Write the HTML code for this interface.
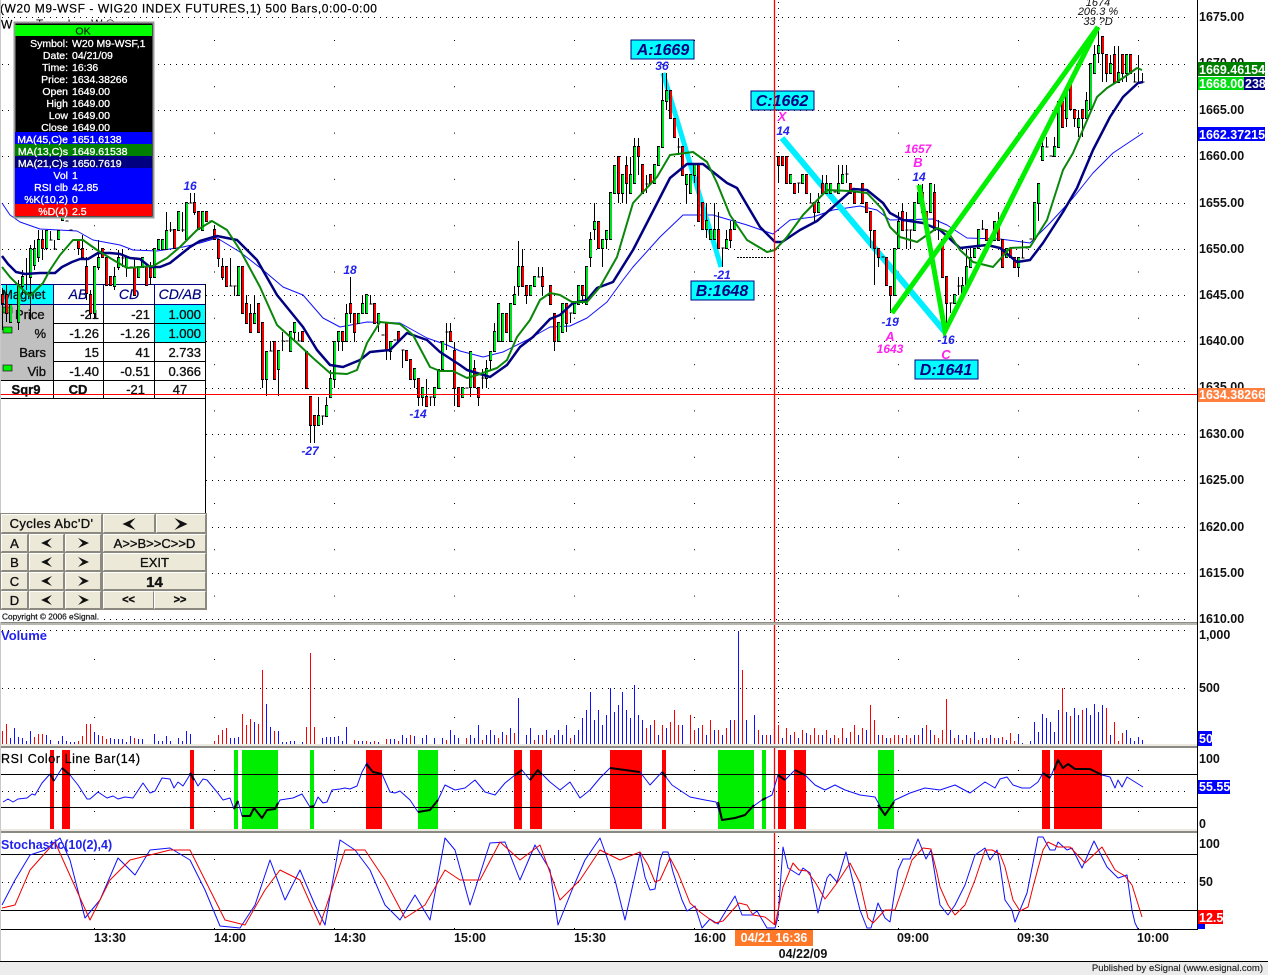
<!DOCTYPE html>
<html><head><meta charset="utf-8"><title>W20 M9-WSF chart</title>
<style>
html,body{margin:0;padding:0;background:#fff}
body{width:1268px;height:975px;overflow:hidden;position:relative;font-family:"Liberation Sans",sans-serif}
svg{position:absolute;left:0;top:0}
svg text{font-family:"Liberation Sans",sans-serif}
polyline{stroke-linejoin:round}
.ax{font-size:12.5px;font-weight:bold;fill:#111}
.wb{font-size:12.5px;font-weight:bold;fill:#fff}
.t{font-size:13px;fill:#111;stroke:#111;stroke-width:.35}
.ti{font-size:14px;font-style:italic;fill:#000080;stroke:#000080;stroke-width:.2}
.n{font-size:12px;font-weight:bold;font-style:italic;fill:#2222ee;text-anchor:middle}
.m{font-size:13px;font-style:italic;fill:#ff22ee;text-anchor:middle;font-weight:bold}
.lb{font-size:16px;font-weight:bold;font-style:italic;fill:#000080;text-anchor:middle}
.lr{font-size:10.5px;fill:#fff;stroke:#fff;stroke-width:.3;text-anchor:end}
.lv{font-size:10.5px;fill:#fff;stroke:#fff;stroke-width:.3}
.b{position:absolute;box-sizing:border-box;background:#ece9d8;border:1px solid;border-color:#fff #8c8a80 #8c8a80 #fff;font-size:13px;color:#111;text-align:center;-webkit-text-stroke:.35px #111;display:flex;align-items:center;justify-content:center;white-space:nowrap}
.b svg{position:static}
</style></head><body>
<svg width="1268" height="975" viewBox="0 0 1268 975" shape-rendering="auto">
<defs>
<path id="g" d="M10 305V322M18 285V322M22 277V286M30 249V277M34 249V265M38 240V257M46 231V248M58 231V239M62 217V220M94 267V313M98 258V267M114 277V286M118 258V267M126 258V267M138 267V277M142 258V267M154 249V277M158 240V249M162 240V249M166 231V249M178 212V230M186 203V239M202 212V230M238 267V295M254 314V323M266 352V379M278 351V369M290 332V351M294 323V332M318 416V425M326 406V416M330 379V397M334 342V379M338 332V341M346 314V341M358 314V323M362 304V313M366 295V313M378 314V323M390 342V351M414 369V379M422 388V397M434 388V397M438 370V388M442 342V369M462 388V397M470 352V387M486 369V378M490 352V360M494 332V351M498 304V341M502 314V341M510 304V341M514 295V304M518 267V286M530 286V295M534 277V286M558 323V341M562 304V332M574 304V313M578 286V304M586 267V304M590 240V257M594 222V229M602 240V248M606 231V239M610 193V239M614 166V193M622 175V193M630 175V193M634 147V183M654 165V183M658 147V165M662 101V147M666 91V101M686 175V184M690 175V193M694 165V175M706 221V229M710 230V239M714 230V239M726 240V248M734 221V229M790 175V183M802 175V183M818 203V212M826 184V193M830 184V193M838 184V193M842 175V183M894 249V295M898 222V248M914 203V230M918 193V203M930 184V212M954 295V303M962 286V295M966 267V286M970 258V267M974 249V257M978 230V248M994 222V240M1006 249V257M1018 258V267M1034 203V239M1038 184V203M1042 147V160M1054 147V156M1058 102V147M1066 91V118M1078 119V127M1086 101V118M1090 64V109M1094 55V73M1098 46V53M1110 64V73M1118 73V82M1126 55V73"/>
<path id="r" d="M2 295V303M6 295V313M42 240V248M78 240V248M82 249V257M86 267V293M90 295V313M102 249V257M106 258V285M110 277V285M134 268V295M146 267V285M150 267V277M174 230V248M194 203V212M198 212V229M206 212V221M214 230V239M218 240V258M222 267V277M226 267V286M242 267V313M246 304V323M250 314V332M258 304V332M262 323V379M274 342V379M302 332V341M306 352V388M310 397V425M314 416V425M342 332V341M350 304V313M354 314V332M374 304V323M386 323V350M398 332V341M406 351V360M410 360V379M418 379V397M426 397V406M450 332V341M454 351V388M458 388V406M474 369V387M478 388V397M506 314V332M522 267V286M526 286V295M542 277V286M550 286V304M554 314V341M566 304V323M582 286V295M598 222V248M618 157V193M626 166V183M638 147V156M642 165V193M650 175V183M670 91V118M674 119V137M682 147V175M698 165V221M702 203V229M718 230V248M730 230V240M778 157V165M782 157V165M786 157V183M794 184V193M806 175V193M814 203V212M822 184V193M850 184V193M854 193V203M862 184V203M866 203V212M870 212V230M874 231V248M878 249V257M886 258V285M890 287V295M902 212V230M922 193V212M926 212V221M934 193V230M942 240V277M946 277V303M986 230V240M998 222V240M1002 240V267M1010 249V257M1014 258V267M1062 102V127M1070 82V109M1074 110V118M1082 110V118M1102 37V53M1106 55V73M1114 55V82M1122 55V73M1130 55V73"/>
</defs>

<!-- dotted grids -->
<g stroke="#000" stroke-width="1" stroke-dasharray="1 5" fill="none">
<path d="M2 17.5H1188M2 64.5H1188M2 110.5H1188M2 156.5H1188M2 203.5H1188M2 249.5H1188M2 295.5H1188M2 341.5H1188M2 388.5H1188M2 434.5H1188M2 480.5H1188M2 527.5H1188M2 573.5H1188M2 619.5H1188M2 630.5H1188M2 688.5H1188M2 791.5H1188M2 882.5H1188"/>
<path d="M778.5 2V930"/>
</g>
<g stroke="#000" stroke-width="1" stroke-dasharray="1 45.3" fill="none">
<path d="M94.5 40V624M214.5 40V624M334.5 40V624M454.5 40V624M574.5 40V624M694.5 40V624M898.5 40V624M1018.5 40V624M1138.5 40V624"/>
</g>
<g stroke="#000" stroke-width="1" stroke-dasharray="1 57" fill="none">
<path d="M94.5 659V745M214.5 659V745M334.5 659V745M454.5 659V745M574.5 659V745M694.5 659V745M898.5 659V745M1018.5 659V745M1138.5 659V745"/>
</g>
<g stroke="#000" stroke-width="1" stroke-dasharray="1 40" fill="none">
<path d="M94.5 770V830M214.5 770V830M334.5 770V830M454.5 770V830M574.5 770V830M694.5 770V830M898.5 770V830M1018.5 770V830M1138.5 770V830"/>
</g>
<g stroke="#000" stroke-width="1" stroke-dasharray="1 68" fill="none">
<path d="M94.5 859V930M214.5 859V930M334.5 859V930M454.5 859V930M574.5 859V930M694.5 859V930M898.5 859V930M1018.5 859V930M1138.5 859V930"/>
</g>

<!-- table -->
<rect x="0" y="284" width="205.5" height="230" fill="#fff"/>
<rect x="2" y="285" width="51" height="19" fill="#00ffff"/>
<rect x="1" y="304" width="52" height="76" fill="#c0c0c0"/>
<rect x="155" y="304" width="50" height="38" fill="#00ffff"/>
<g stroke="#000080" fill="none">
<path d="M1 284.5H205M53.5 284V304M103.5 284V304M154.5 284V304M1 304.5H205"/>
</g>
<g stroke="#000" fill="none">
<path d="M53 323.5H205M53 342.5H205M53 361.5H205M1 380.5H205M1 398.5H205M53.5 304V399M103.5 304V399M154.5 304V399M205.5 284V514"/>
</g>
<g>
<text x="2" y="299" class="t">Magnet</text>
<text x="15" y="319" class="t">Price</text>
<text x="46" y="338" text-anchor="end" class="t">%</text>
<text x="46" y="357" text-anchor="end" class="t">Bars</text>
<text x="46" y="376" text-anchor="end" class="t">Vib</text>
<text x="26" y="394" text-anchor="middle" class="t" style="font-weight:bold">Sqr9</text>
<text x="78" y="299" text-anchor="middle" class="ti">AB</text>
<text x="129" y="299" text-anchor="middle" class="ti">CD</text>
<text x="180" y="299" text-anchor="middle" class="ti">CD/AB</text>
<text x="99" y="319" text-anchor="end" class="t">-21</text><text x="150" y="319" text-anchor="end" class="t">-21</text><text x="201" y="319" text-anchor="end" class="t">1.000</text>
<text x="99" y="338" text-anchor="end" class="t">-1.26</text><text x="150" y="338" text-anchor="end" class="t">-1.26</text><text x="201" y="338" text-anchor="end" class="t">1.000</text>
<text x="99" y="357" text-anchor="end" class="t">15</text><text x="150" y="357" text-anchor="end" class="t">41</text><text x="201" y="357" text-anchor="end" class="t">2.733</text>
<text x="99" y="376" text-anchor="end" class="t">-1.40</text><text x="150" y="376" text-anchor="end" class="t">-0.51</text><text x="201" y="376" text-anchor="end" class="t">0.366</text>
<text x="78" y="394" text-anchor="middle" class="t" style="font-weight:bold">CD</text>
<text x="145" y="394" text-anchor="end" class="t">-21</text>
<text x="180" y="394" text-anchor="middle" class="t">47</text>
</g>
<rect x="3" y="307" width="9" height="6" fill="#00ee00" stroke="#000" stroke-width=".6"/>
<rect x="3" y="327" width="9" height="6" fill="#00ee00" stroke="#000" stroke-width=".6"/>
<rect x="3" y="365" width="9" height="6" fill="#00ee00" stroke="#000" stroke-width=".6"/>

<!-- thin MA45 -->
<polyline fill="none" stroke="#1010ff" stroke-width="1" points="2,203 10,215 20,222 40,229 77,231 93,240 120,245 133,250 157,251 183,247 200,243 217,238 240,252 263,270 283,287 303,295 323,318 340,327 367,322 400,323 427,338 447,345 460,351 483,357 503,352 527,340 550,327 570,326 587,318 607,302 623,280 633,267 660,237 683,215 713,215 747,225 773,234 790,220 813,217 833,210 860,206 877,210 890,220 933,219 947,225 967,238 1000,239 1030,243 1050,223 1073,198 1093,173 1113,153 1143,133"/>

<!-- cyan pattern lines -->
<g fill="none" stroke="#00eeff">
<path d="M663 73L721 267" stroke-width="5"/>
<path d="M782 138L945 332" stroke-width="6"/>
</g>

<!-- candles -->
<g transform="translate(.5,0)" stroke="#000" stroke-width="1" fill="none">
<path d="M2 288V330M6 285V322M18 280V330M22 270V295M26 258V290M30 245V320M34 240V270M38 230V262M42 230V260M46 231V250M50 231V240M54 240V250M78 240V255M82 235V260M86 257V300M90 290V318M94 267V318M98 240V270M114 267V290M118 250V270M122 250V267M126 258V277M134 258V295M150 262V285M166 212V249M170 222V232M182 212V232M186 203V240M190 193V203M194 193V215M214 225V240M218 240V267M222 258V280M230 258V286M234 286V296M246 295V323M250 304V332M254 295V323M262 323V388M266 352V396M270 341V351M278 351V396M282 332V351M294 323V342M298 332V341M310 397V443M314 416V443M318 397V425M322 416V425M326 397V416M330 370V397M334 342V388M338 332V351M342 332V351M346 304V341M350 277V323M354 314V342M362 295V313M370 295V304M378 314V332M386 323V360M390 342V360M402 350V368M414 369V388M418 379V406M422 388V406M426 379V406M430 397V406M434 388V406M446 323V350M450 323V341M454 342V406M458 388V406M470 352V397M474 360V387M478 388V406M482 369V388M486 360V388M490 352V370M494 323V351M514 286V304M518 241V296M522 249V286M526 286V304M538 267V277M542 267V296M554 314V351M566 304V332M570 313V323M582 286V304M590 232V267M594 203V240M602 240V267M606 231V249M614 175V193M618 157V203M622 175V203M626 157V203M630 157V193M634 138V183M638 138V175M646 175V193M662 73V147M666 73V110M678 138V155M686 175V203M694 165V183M706 203V238M714 203V239M718 212V248M722 248V267M726 230V248M730 221V248M778 157V183M798 183V193M810 193V203M814 203V221M818 193V212M822 175V193M826 175V193M838 165V193M842 165V183M846 165V183M870 212V248M874 231V285M878 249V267M890 287V313M898 212V248M902 203V230M906 212V249M910 230V249M918 184V203M922 184V212M934 184V230M938 220V240M946 277V332M950 303V313M958 277V295M962 277V295M966 249V286M970 248V267M982 220V230M998 212V240M1018 258V277M1022 240V258M1038 184V221M1042 138V160M1046 137V147M1054 137V156M1062 93V127M1066 91V127M1074 110V127M1078 110V137M1082 110V137M1086 92V118M1094 45V73M1098 27V63M1102 37V82M1106 55V82M1110 55V73M1114 46V82M1118 46V82M1122 55V82M1126 55V82M1134 73V82M1138 55V82M1142 73V82"/>
<path d="M49 240h3M53 249h3M65 221h3M69 230h3M73 240h3M121 258h3M129 267h3M169 230h3M181 230h3M189 203h3M209 221h3M229 286h3M233 286h3M269 351h3M281 341h3M285 341h3M297 341h3M321 416h3M369 304h3M381 335h3M393 340h3M401 350h3M429 397h3M445 332h3M465 388h3M481 378h3M537 277h3M545 295h3M569 313h3M645 184h3M677 147h3M721 248h3M797 183h3M809 203h3M833 192h3M845 174h3M881 257h3M905 230h3M909 230h3M937 230h3M949 303h3M957 286h3M981 229h3M989 240h3M1021 258h3M1025 248h3M1029 239h3M1045 147h3M1049 156h3M1133 82h3M1137 82h3M1141 82h3"/>
<g stroke-width="3">
<use href="#g" y="-1"/><use href="#g" y="1"/><use href="#r" y="-1"/><use href="#r" y="1"/>
</g>
</g>
<g transform="translate(1,0)" fill="none" stroke-width="2">
<use href="#g" stroke="#00e020"/>
<use href="#r" stroke="#ee0000"/>
</g>

<!-- dashed -->
<path d="M737 257.5H775" stroke="#000" stroke-dasharray="2 1" fill="none"/>

<!-- MA21 navy -->
<polyline fill="none" stroke="#000080" stroke-width="2.5" points="2,256 8,264 16,272 25,274 40,273 55,273 62,267 72,262 80,259 88,259 98,253 110,253 120,254 130,258 140,259 150,267 160,267 170,263 180,255 190,247 200,241 217,236 237,240 257,260 277,295 303,327 317,350 330,365 343,367 360,360 370,352 390,350 407,333 427,340 440,352 460,365 467,370 490,377 507,365 520,347 533,337 550,319 560,315 573,303 587,300 597,288 613,282 633,250 650,217 670,178 687,164 703,164 713,172 727,183 737,188 747,205 760,227 775,242 782,242 800,230 817,221 833,207 853,189 867,190 883,203 890,213 903,220 923,223 940,230 960,248 987,245 1000,248 1017,262 1030,260 1043,243 1063,212 1077,188 1093,150 1110,117 1123,97 1138,83 1143,82"/>
<!-- MA13 green -->
<polyline fill="none" stroke="#0a860a" stroke-width="2" points="2,267 10,277 20,287 30,296 43,283 50,270 60,255 73,240 83,240 97,250 110,258 127,268 140,267 153,266 167,258 180,247 197,230 212,221 227,230 240,250 260,287 277,325 297,343 313,358 330,373 347,374 357,370 367,343 380,322 400,324 413,335 430,367 440,371 453,371 467,378 477,375 497,368 507,360 517,337 530,320 540,300 550,293 560,295 572,302 587,302 600,287 617,257 633,203 657,177 670,155 693,152 707,162 717,183 730,215 747,240 767,252 775,250 787,237 803,215 827,190 850,191 867,193 883,210 890,227 900,237 917,242 937,228 948,232 960,250 973,262 993,267 1010,248 1030,247 1047,220 1063,170 1073,153 1097,97 1107,88 1123,78 1137,68 1142,70"/>

<!-- green pattern lines -->
<g fill="none" stroke="#00f000" stroke-width="5">
<path d="M892 313L1098 27"/>
<path d="M919 185L945 331L1098 27"/>
</g>

<!-- annotations -->
<g>
<rect x="631" y="40" width="63" height="19" fill="#00ffff" stroke="#000080"/><text x="663" y="55" class="lb">A:1669</text>
<rect x="751" y="91" width="63" height="19" fill="#00ffff" stroke="#000080"/><text x="782" y="106" class="lb">C:1662</text>
<rect x="691" y="281" width="63" height="19" fill="#00ffff" stroke="#000080"/><text x="722" y="296" class="lb">B:1648</text>
<rect x="915" y="360" width="63" height="19" fill="#00ffff" stroke="#000080"/><text x="946" y="375" class="lb">D:1641</text>
<text x="662" y="70" class="n">36</text>
<text x="783" y="135" class="n">14</text>
<text x="722" y="279" class="n">-21</text>
<text x="190" y="190" class="n">16</text>
<text x="350" y="274" class="n">18</text>
<text x="310" y="455" class="n">-27</text>
<text x="418" y="418" class="n">-14</text>
<text x="919" y="181" class="n">14</text>
<text x="890" y="326" class="n">-19</text>
<text x="946" y="344" class="n">-16</text>
<text x="782" y="121" class="m">X</text>
<text x="918" y="153" class="m" style="font-size:12px">1657</text>
<text x="918" y="167" class="m">B</text>
<text x="890" y="341" class="m">A</text>
<text x="890" y="353" class="m" style="font-size:12px">1643</text>
<text x="946" y="359" class="m">C</text>
<g style="font-size:11px;font-style:italic;fill:#111;text-anchor:middle">
<text x="1098" y="6">1674</text>
<text x="1098" y="15">206.3 %</text>
<text x="1098" y="25">33 ?D</text>
</g>
</g>

<!-- crosshair -->
<path d="M0 394.5H1197" stroke="#ff0000" fill="none"/>
<path d="M774.5 0V925" stroke="#ff0000" stroke-width="1.3" fill="none"/>

<!-- title -->
<text x="0" y="12.5" textLength="377" style="font-size:12px;fill:#000;stroke:#000;stroke-width:.2">(W20 M9-WSF - WIG20 INDEX FUTURES,1) 500 Bars,0:00-0:00</text>
<text x="1" y="28.5" style="font-size:12px;fill:#000;stroke:#000;stroke-width:.2">W</text>
<text x="36" y="28" style="font-size:12px;fill:#000">T  r  a  d  e  r   W  ®</text>

<!-- Volume pane -->
<text x="1" y="640" style="font-size:13px;font-weight:bold;fill:#2222ee">Volume</text>
<path fill="none" stroke="#ff0000" d="M2.5 731V745M6.5 724V745M34.5 737V745M38.5 734V745M42.5 734V745M78.5 741V745M82.5 736V745M86.5 724V745M90.5 724V745M102.5 736V745M106.5 739V745M134.5 738V745M214.5 741V745M218.5 735V745M222.5 730V745M226.5 728V745M242.5 714V745M246.5 725V745M250.5 719V745M258.5 724V745M262.5 670V745M274.5 731V745M306.5 727V745M310.5 653V745M314.5 727V745M354.5 740V745M366.5 741V745M374.5 741V745M386.5 739V745M398.5 741V745M410.5 735V745M446.5 740V745M466.5 738V745M482.5 740V745M498.5 738V745M506.5 735V745M514.5 733V745M534.5 740V745M542.5 735V745M550.5 738V745M570.5 738V745M646.5 728V745M654.5 720V745M662.5 725V745M670.5 722V745M674.5 710V745M678.5 725V745M690.5 715V745M694.5 730V745M702.5 725V745M710.5 720V745M718.5 730V745M726.5 728V745M734.5 720V745M742.5 670V745M758.5 730V745M766.5 735V745M778.5 725V745M786.5 728V745M794.5 732V745M802.5 730V745M810.5 735V745M814.5 728V745M818.5 735V745M826.5 730V745M834.5 735V745M838.5 738V745M842.5 728V745M850.5 732V745M854.5 725V745M862.5 728V745M870.5 705V745M874.5 720V745M882.5 735V745M890.5 738V745M894.5 735V745M898.5 735V745M906.5 735V745M910.5 738V745M918.5 735V745M926.5 725V745M934.5 735V745M938.5 738V745M942.5 730V745M946.5 699V745M954.5 738V745M962.5 740V745M970.5 738V745M978.5 740V745M986.5 738V745M994.5 738V745M1002.5 737V745M1010.5 733V745M1014.5 741V745M1062.5 688V745M1070.5 716V745M1082.5 710V745M1106.5 708V745M1114.5 722V745M1118.5 741V745M1122.5 733V745"/>
<path fill="none" stroke="#1010ff" d="M10.5 738V745M14.5 728V745M18.5 737V745M22.5 738V745M26.5 741V745M30.5 731V745M46.5 735V745M50.5 740V745M58.5 741V745M62.5 736V745M66.5 741V745M70.5 742V745M74.5 742V745M94.5 732V745M98.5 735V745M110.5 738V745M114.5 739V745M118.5 739V745M122.5 739V745M126.5 742V745M130.5 736V745M138.5 739V745M142.5 739V745M154.5 734V745M158.5 741V745M162.5 741V745M166.5 736V745M170.5 741V745M178.5 738V745M182.5 741V745M186.5 731V745M190.5 734V745M230.5 738V745M234.5 738V745M238.5 737V745M254.5 722V745M266.5 704V745M270.5 727V745M278.5 731V745M282.5 742V745M286.5 742V745M290.5 741V745M294.5 741V745M302.5 742V745M322.5 738V745M326.5 737V745M330.5 737V745M334.5 737V745M338.5 736V745M342.5 741V745M346.5 727V745M358.5 741V745M362.5 741V745M370.5 742V745M378.5 742V745M390.5 739V745M394.5 739V745M402.5 735V745M406.5 738V745M414.5 736V745M422.5 738V745M426.5 735V745M434.5 738V745M442.5 738V745M450.5 730V745M454.5 735V745M458.5 738V745M470.5 735V745M474.5 738V745M478.5 725V745M486.5 735V745M490.5 730V745M494.5 735V745M502.5 732V745M510.5 728V745M518.5 698V745M526.5 735V745M530.5 728V745M538.5 735V745M546.5 730V745M554.5 735V745M558.5 730V745M562.5 735V745M566.5 725V745M574.5 735V745M578.5 730V745M582.5 718V745M586.5 710V745M590.5 692V745M594.5 720V745M598.5 710V745M602.5 725V745M606.5 715V745M610.5 688V745M614.5 712V745M618.5 705V745M622.5 692V745M626.5 710V745M630.5 718V745M634.5 685V745M638.5 715V745M642.5 720V745M650.5 725V745M658.5 735V745M666.5 728V745M682.5 725V745M698.5 728V745M706.5 735V745M714.5 730V745M722.5 735V745M730.5 720V745M738.5 631V745M746.5 720V745M754.5 715V745M762.5 735V745M770.5 735V745M782.5 738V745M790.5 735V745M798.5 738V745M806.5 733V745M822.5 735V745M830.5 738V745M846.5 738V745M858.5 735V745M866.5 730V745M878.5 735V745M886.5 738V745M902.5 738V745M914.5 735V745M922.5 728V745M930.5 730V745M950.5 730V745M958.5 735V745M966.5 735V745M974.5 732V745M982.5 738V745M990.5 735V745M998.5 738V745M1006.5 740V745M1018.5 734V745M1022.5 743V745M1030.5 741V745M1034.5 722V745M1038.5 732V745M1042.5 714V745M1046.5 718V745M1050.5 722V745M1054.5 732V745M1058.5 710V745M1066.5 712V745M1074.5 708V745M1078.5 715V745M1086.5 708V745M1090.5 715V745M1094.5 704V745M1098.5 712V745M1102.5 705V745M1110.5 735V745M1126.5 730V745M1130.5 738V745M1134.5 741V745M1138.5 737V745M1142.5 740V745"/>

<!-- RSI pane -->
<g fill="#ff0000">
<rect x="50" y="750" width="4" height="80"/><rect x="62" y="750" width="8" height="80"/><rect x="190" y="750" width="4" height="80"/><rect x="366" y="750" width="16" height="80"/><rect x="514" y="750" width="8" height="80"/><rect x="530" y="750" width="12" height="80"/><rect x="610" y="750" width="32" height="80"/><rect x="662" y="750" width="4" height="80"/><rect x="778" y="750" width="8" height="80"/><rect x="794" y="750" width="12" height="80"/><rect x="1042" y="750" width="8" height="80"/><rect x="1054" y="750" width="48" height="80"/>
</g>
<g fill="#00ee00">
<rect x="234" y="750" width="4" height="80"/><rect x="242" y="750" width="36" height="80"/><rect x="310" y="750" width="4" height="80"/><rect x="418" y="750" width="20" height="80"/><rect x="718" y="750" width="36" height="80"/><rect x="762" y="750" width="4" height="80"/><rect x="878" y="750" width="16" height="80"/>
</g>
<path d="M0 774.5H1197M0 807.5H1197" stroke="#000" fill="none"/>
<polyline fill="none" stroke="#1010ff" points="3,802 8,799 13,802 18,799 27,798 32,794 35,795 42,783 50,774 54,781 62,768 70,775 78,785 87,799 90,799 98,792 107,798 113,796 118,799 125,797 133,798 143,783 150,793 155,791 162,778 170,779 174,788 178,782 183,786 191,773 198,786 203,779 207,780 217,792 223,800 230,798 234,809 238,801 242,816 250,816 254,808 262,818 267,810 275,809 280,800 293,798 302,794 310,807 314,806 318,797 323,803 327,802 332,790 340,789 345,788 350,789 357,786 362,772 367,763 373,772 382,774 390,792 395,793 400,791 410,800 418,812 430,810 438,800 445,785 455,790 465,788 475,780 485,792 495,795 505,783 515,775 522,770 530,780 538,770 550,782 560,790 570,782 580,798 590,790 600,778 610,768 625,770 640,772 650,785 662,772 672,785 690,797 705,800 716,802 722,820 735,818 745,815 755,805 762,800 772,795 778,775 785,780 795,770 805,775 815,785 825,790 835,785 845,790 860,795 875,797 885,815 895,800 910,793 925,788 940,790 955,785 970,793 985,782 995,788 1000,779 1007,777 1013,785 1022,788 1030,788 1038,782 1043,773 1050,778 1058,760 1063,768 1068,764 1075,769 1090,769 1102,775 1110,777 1115,788 1118,780 1122,787 1127,777 1143,787"/>
<g fill="none" stroke="#000" stroke-width="2">
<polyline points="50,774 54,781"/><polyline points="62,768 70,775"/><polyline points="190,773 194,780"/>
<polyline points="234,809 238,801"/><polyline points="242,816 250,816 254,808 262,818 267,810 275,809 278,803"/><polyline points="310,807 314,806"/>
<polyline points="366,764 373,772 382,774"/><polyline points="418,812 430,810 438,800"/><polyline points="515,775 522,770"/><polyline points="530,780 538,770 542,775"/>
<polyline points="610,768 625,770 640,772"/><polyline points="662,772 666,777"/><polyline points="718,802 722,820 735,818 745,815 754,805"/><polyline points="762,800 766,798"/>
<polyline points="778,775 785,780"/><polyline points="795,770 805,775"/><polyline points="878,805 885,815 894,802"/>
<polyline points="1043,773 1050,778"/><polyline points="1054,770 1058,760 1063,768 1068,764 1075,769 1090,769 1102,775"/>
</g>
<text x="1" y="763" style="font-size:12.5px;fill:#000;stroke:#000;stroke-width:.25" textLength="139">RSI Color Line Bar(14)</text>

<!-- Stoch pane -->
<path d="M0 854.5H1197M0 910.5H1197M0 929.5H1197" stroke="#000" fill="none"/>
<polyline fill="none" stroke="#1010ff" points="2,905 15,880 30,855 45,850 60,838 70,860 85,918 100,900 118,858 135,875 150,850 170,848 190,860 205,890 220,926 240,928 255,905 270,860 285,900 300,870 315,905 325,925 340,840 355,850 370,870 385,905 400,920 415,895 430,920 445,838 455,850 470,905 490,843 505,842 520,880 535,845 550,870 558,925 572,890 585,860 600,838 615,880 625,920 640,853 645,877 650,890 655,889 660,860 663,852 668,852 673,872 682,900 687,911 695,906 702,928 710,919 718,924 727,909 735,896 742,915 752,915 757,911 767,928 775,928 778,917 783,847 788,868 799,875 803,868 810,873 818,913 827,878 830,874 837,882 846,852 853,882 860,910 867,928 871,928 878,903 885,918 890,922 898,870 903,859 910,859 918,839 926,859 931,850 937,887 940,905 948,915 955,905 965,885 975,855 985,848 990,860 997,850 1000,865 1005,900 1012,910 1015,922 1020,910 1027,893 1033,863 1038,837 1043,837 1050,850 1055,850 1058,842 1067,850 1072,848 1082,868 1094,841 1107,867 1118,878 1127,875 1132,910 1135,923 1138,929"/>
<polyline fill="none" stroke="#ee0000" points="2,908 15,905 30,870 55,842 72,880 90,920 110,880 130,860 150,855 170,850 190,850 210,890 225,920 245,925 265,890 280,870 300,880 320,925 345,850 365,850 385,880 405,918 425,905 445,870 460,880 480,880 500,842 520,860 540,845 560,900 580,880 600,850 620,860 640,852 648,865 655,882 660,880 670,858 678,873 690,903 700,912 715,923 723,921 739,903 747,905 753,915 765,917 775,925 783,887 793,863 799,870 807,871 815,882 825,899 837,883 850,863 860,883 868,918 873,923 885,910 895,910 903,887 912,860 923,848 931,849 937,873 940,887 948,905 955,915 965,905 975,880 985,850 992,850 1000,854 1005,867 1013,900 1020,911 1028,907 1033,887 1043,850 1048,842 1058,847 1070,847 1085,863 1102,847 1115,870 1125,876 1132,885 1142,917"/>
<text x="1" y="849" style="font-size:12.5px;font-weight:bold;fill:#2222ee">Stochastic(10(2),4)</text>

<!-- separators -->
<rect x="0" y="622" width="1197" height="3" fill="#b8b6ae"/><rect x="0" y="622" width="1197" height="1" fill="#8a8a84"/>
<rect x="0" y="744" width="1197" height="4" fill="#ece9e0"/><rect x="0" y="746" width="1197" height="2" fill="#8a8a84"/>
<rect x="0" y="829" width="1197" height="4" fill="#ece9e0"/><rect x="0" y="831" width="1197" height="2" fill="#8a8a84"/>
<rect x="0" y="0" width="1" height="961" fill="#c8c8c8"/>

<!-- axis -->
<path d="M1197.5 0V930" stroke="#000" fill="none"/>
<g class="ax">
<text x="1199" y="21">1675.00</text><text x="1199" y="67">1670.00</text><text x="1199" y="114">1665.00</text><text x="1199" y="160">1660.00</text><text x="1199" y="207">1655.00</text><text x="1199" y="253">1650.00</text><text x="1199" y="299">1645.00</text><text x="1199" y="345">1640.00</text><text x="1199" y="391">1635.00</text><text x="1199" y="438">1630.00</text><text x="1199" y="484">1625.00</text><text x="1199" y="531">1620.00</text><text x="1199" y="577">1615.00</text><text x="1199" y="623">1610.00</text>
<text x="1199" y="639">1,000</text><text x="1199" y="692">500</text>
<text x="1199" y="763">100</text><text x="1199" y="828">0</text>
<text x="1199" y="848">100</text><text x="1199" y="886">50</text>
<text x="110" y="942" text-anchor="middle">13:30</text><text x="230" y="942" text-anchor="middle">14:00</text><text x="350" y="942" text-anchor="middle">14:30</text><text x="470" y="942" text-anchor="middle">15:00</text><text x="590" y="942" text-anchor="middle">15:30</text><text x="710" y="942" text-anchor="middle">16:00</text><text x="913" y="942" text-anchor="middle">09:00</text><text x="1033" y="942" text-anchor="middle">09:30</text><text x="1153" y="942" text-anchor="middle">10:00</text>
<text x="803" y="958" text-anchor="middle">04/22/09</text>
</g>
<rect x="1198" y="62" width="67" height="14" fill="#008000"/><text x="1199" y="74" class="wb">1669.46154</text>
<rect x="1198" y="77" width="46" height="13" fill="#00dd10"/><rect x="1244" y="77" width="21" height="13" fill="#000080"/><text x="1199" y="88" class="wb">1668.00</text><text x="1245" y="88" class="wb">238</text>
<rect x="1198" y="127" width="67" height="14" fill="#0000ff"/><text x="1199" y="139" class="wb">1662.37215</text>
<rect x="1198" y="388" width="67" height="14" fill="#ff7f3f"/><text x="1199" y="399" class="wb">1634.38266</text>
<rect x="1198" y="731" width="14" height="15" fill="#0000ff"/><text x="1199" y="743" class="wb">50</text>
<rect x="1198" y="780" width="32" height="14" fill="#0000ff"/><text x="1199" y="791" class="wb">55.55</text>
<rect x="1198" y="910" width="25" height="14" fill="#ff0000"/><text x="1199" y="922" class="wb">12.5</text>
<rect x="1198" y="924" width="7" height="5" fill="#0000ff"/>
<rect x="735" y="930" width="78" height="16" fill="#ff7828"/><text x="774" y="942" text-anchor="middle" class="wb">04/21 16:36</text>

<!-- status -->
<rect x="0" y="961" width="1268" height="14" fill="#ececec"/>
<rect x="0" y="961" width="1268" height="1" fill="#000"/>
<text x="1263" y="971" text-anchor="end" style="font-size:9.5px;fill:#222;stroke:#222;stroke-width:.15">Published by eSignal (www.esignal.com)</text>

<!-- copyright -->
<rect x="0" y="610" width="100" height="12" fill="#fff"/>
<text x="2" y="619.5" textLength="97" style="font-size:8.3px;fill:#111;stroke:#111;stroke-width:.2">Copyright © 2006 eSignal.</text>

<!-- info box -->
<rect x="14.5" y="22.5" width="139" height="195" fill="#000" stroke="#9a9a9a" stroke-width="2"/>
<rect x="15" y="25" width="137" height="11" fill="#00ff00"/>
<text x="83" y="34.5" text-anchor="middle" style="font-size:10.5px;fill:#002000;stroke:#002000;stroke-width:.2">OK</text>
<rect x="15" y="132" width="137" height="12" fill="#0000ff"/>
<rect x="15" y="144" width="137" height="12" fill="#008000"/>
<rect x="15" y="156" width="137" height="12" fill="#000080"/>
<rect x="15" y="168" width="137" height="36" fill="#0000ff"/>
<rect x="15" y="204" width="137" height="12" fill="#ff0000"/>
<text x="68" y="47" class="lr">Symbol:</text><text x="72" y="47" class="lv">W20 M9-WSF,1</text>
<text x="68" y="59" class="lr">Date:</text><text x="72" y="59" class="lv">04/21/09</text>
<text x="68" y="71" class="lr">Time:</text><text x="72" y="71" class="lv">16:36</text>
<text x="68" y="83" class="lr">Price:</text><text x="72" y="83" class="lv">1634.38266</text>
<text x="68" y="95" class="lr">Open</text><text x="72" y="95" class="lv">1649.00</text>
<text x="68" y="107" class="lr">High</text><text x="72" y="107" class="lv">1649.00</text>
<text x="68" y="119" class="lr">Low</text><text x="72" y="119" class="lv">1649.00</text>
<text x="68" y="131" class="lr">Close</text><text x="72" y="131" class="lv">1649.00</text>
<text x="68" y="143" class="lr">MA(45,C)e</text><text x="72" y="143" class="lv">1651.6138</text>
<text x="68" y="155" class="lr">MA(13,C)s</text><text x="72" y="155" class="lv">1649.61538</text>
<text x="68" y="167" class="lr">MA(21,C)s</text><text x="72" y="167" class="lv">1650.7619</text>
<text x="68" y="179" class="lr">Vol</text><text x="72" y="179" class="lv">1</text>
<text x="68" y="191" class="lr">RSI clb</text><text x="72" y="191" class="lv">42.85</text>
<text x="68" y="203" class="lr">%K(10,2)</text><text x="72" y="203" class="lv">0</text>
<text x="68" y="215" class="lr">%D(4)</text><text x="72" y="215" class="lv">2.5</text>
</svg>

<!-- buttons -->
<div style="position:absolute;left:0;top:513px;width:207px;height:97px;background:#8c8a80"></div>
<div class="b" style="left:1px;top:514px;width:101px;height:19px;letter-spacing:.4px">Cycles Abc'D'</div>
<div class="b" style="left:103px;top:514px;width:52px;height:19px"><svg width="14" height="12" viewBox="0 0 12 11"><path d="M12 0L0 5.5L12 11L7 5.5Z" fill="#111"/></svg></div>
<div class="b" style="left:156px;top:514px;width:50px;height:19px"><svg width="14" height="12" viewBox="0 0 12 11"><path d="M0 0L12 5.5L0 11L5 5.5Z" fill="#111"/></svg></div>

<div class="b" style="left:1px;top:534px;width:27px;height:18px">A</div>
<div class="b" style="left:29px;top:534px;width:35px;height:18px"><svg width="11" height="10" viewBox="0 0 12 11"><path d="M12 0L0 5.5L12 11L7 5.5Z" fill="#111"/></svg></div>
<div class="b" style="left:65px;top:534px;width:36px;height:18px"><svg width="11" height="10" viewBox="0 0 12 11"><path d="M0 0L12 5.5L0 11L5 5.5Z" fill="#111"/></svg></div>
<div class="b" style="left:103px;top:534px;width:103px;height:18px">A&gt;&gt;B&gt;&gt;C&gt;&gt;D</div>

<div class="b" style="left:1px;top:553px;width:27px;height:18px">B</div>
<div class="b" style="left:29px;top:553px;width:35px;height:18px"><svg width="11" height="10" viewBox="0 0 12 11"><path d="M12 0L0 5.5L12 11L7 5.5Z" fill="#111"/></svg></div>
<div class="b" style="left:65px;top:553px;width:36px;height:18px"><svg width="11" height="10" viewBox="0 0 12 11"><path d="M0 0L12 5.5L0 11L5 5.5Z" fill="#111"/></svg></div>
<div class="b" style="left:103px;top:553px;width:103px;height:18px">EXIT</div>

<div class="b" style="left:1px;top:572px;width:27px;height:18px">C</div>
<div class="b" style="left:29px;top:572px;width:35px;height:18px"><svg width="11" height="10" viewBox="0 0 12 11"><path d="M12 0L0 5.5L12 11L7 5.5Z" fill="#111"/></svg></div>
<div class="b" style="left:65px;top:572px;width:36px;height:18px"><svg width="11" height="10" viewBox="0 0 12 11"><path d="M0 0L12 5.5L0 11L5 5.5Z" fill="#111"/></svg></div>
<div class="b" style="left:103px;top:572px;width:103px;height:18px;font-weight:bold;font-size:15px;padding-top:2px">14</div>

<div class="b" style="left:1px;top:591px;width:27px;height:18px">D</div>
<div class="b" style="left:29px;top:591px;width:35px;height:18px"><svg width="11" height="10" viewBox="0 0 12 11"><path d="M12 0L0 5.5L12 11L7 5.5Z" fill="#111"/></svg></div>
<div class="b" style="left:65px;top:591px;width:36px;height:18px"><svg width="11" height="10" viewBox="0 0 12 11"><path d="M0 0L12 5.5L0 11L5 5.5Z" fill="#111"/></svg></div>
<div class="b" style="left:103px;top:591px;width:51px;height:18px;font-weight:bold;font-size:11px">&lt;&lt;</div>
<div class="b" style="left:154px;top:591px;width:52px;height:18px;font-weight:bold;font-size:11px">&gt;&gt;</div>
</body></html>
